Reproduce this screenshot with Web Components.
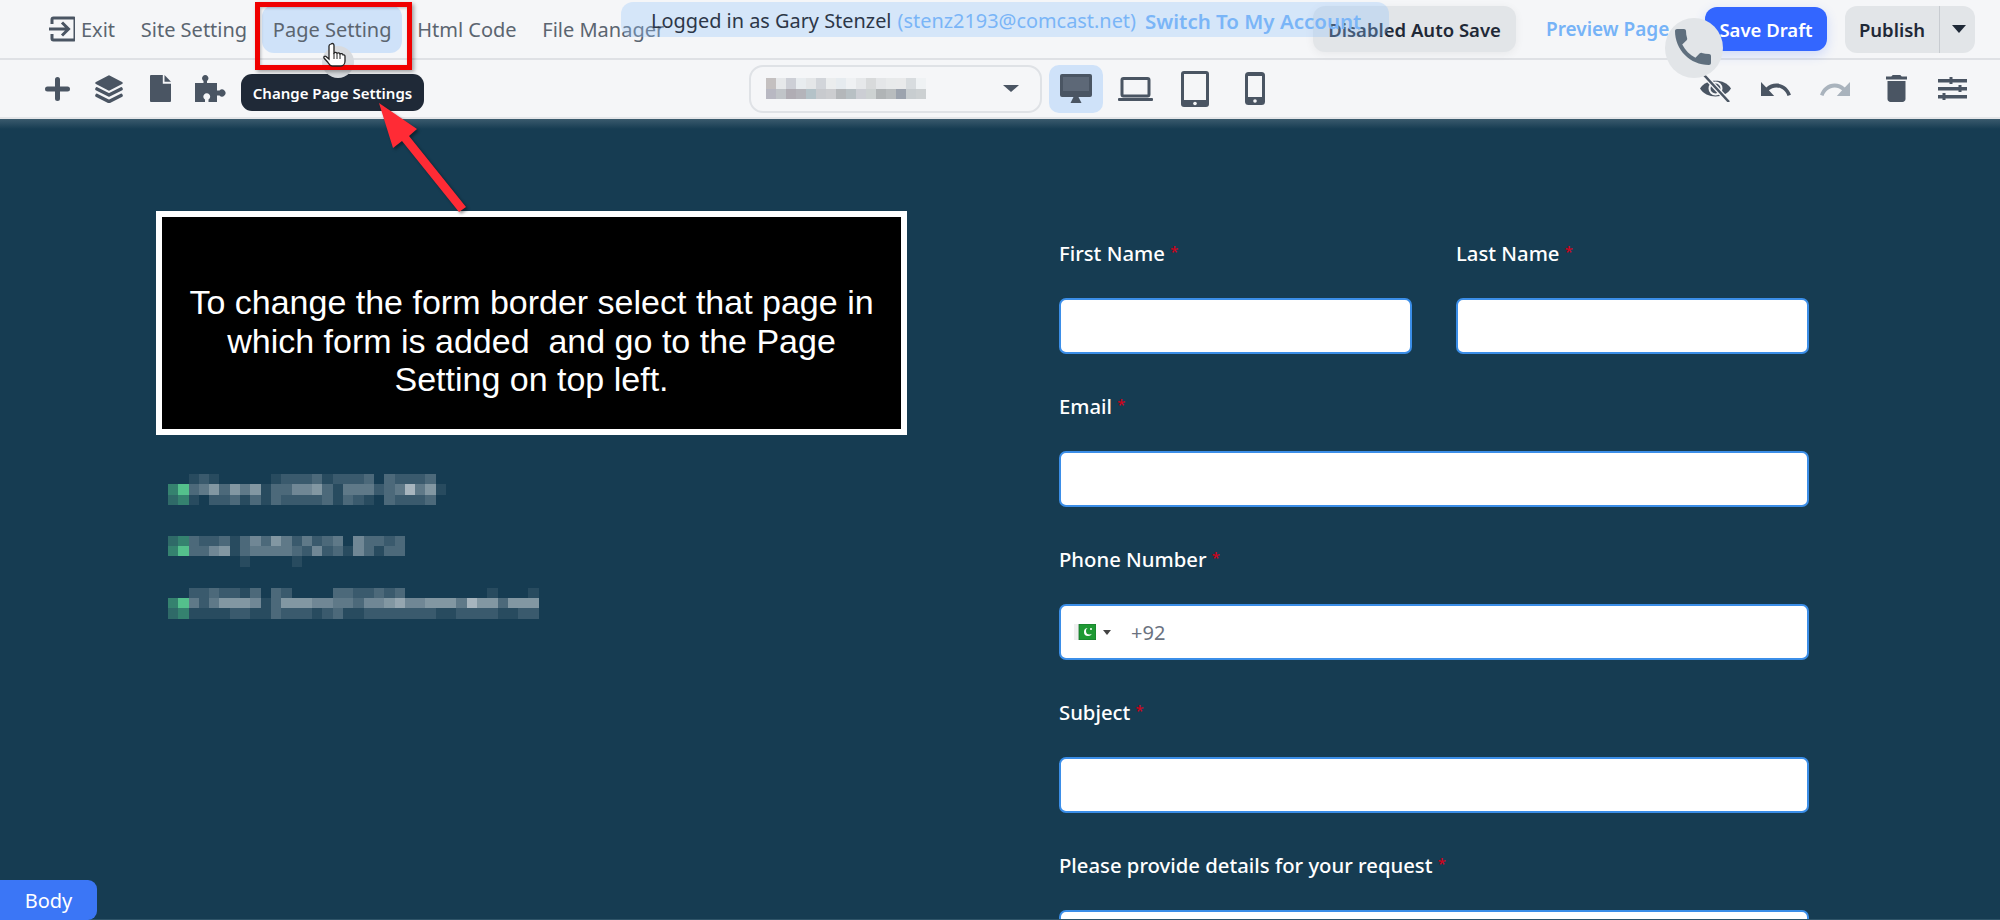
<!DOCTYPE html>
<html>
<head>
<meta charset="utf-8">
<title>Page builder</title>
<style>
    html, body { margin: 0; padding: 0; background: #163c52; }
    body { overflow: hidden; font-family: "Noto Sans", sans-serif; }
</style>
</head>
<body>
<editor-app></editor-app>

<script>
const ICONS = {
    exit: `<path d="M3 8V3.5A1.5 1.5 0 0 1 4.5 2h20A1.5 1.5 0 0 1 26 3.5v19a1.5 1.5 0 0 1-1.5 1.5h-20A1.5 1.5 0 0 1 3 22.500V18" fill="none" stroke="currentColor" stroke-width="3"/><path d="M0 13h19M13 6.500l6.500 6.500-6.500 6.500" fill="none" stroke="currentColor" stroke-width="3"/>`,
    plus: `<path d="M12.500 2.500v19M2.500 12h20" fill="none" stroke="currentColor" stroke-width="5" stroke-linecap="round"/>`,
    layers: `<path d="M14 1.500L26.500 8 14 14.500 1.500 8z" fill="currentColor" stroke="currentColor" stroke-width="2.500" stroke-linejoin="round"/><path d="M2 14l12 6 12-6M2 20.500l12 6 12-6" fill="none" stroke="currentColor" stroke-width="3.600" stroke-linecap="round" stroke-linejoin="round"/>`,
    file: `<path d="M1 0h11.800v8.800H21V26a1 1 0 0 1-1 1H1a1 1 0 0 1-1-1V1a1 1 0 0 1 1-1z" fill="currentColor"/><path d="M14.500 0L21 6.800h-6.500z" fill="currentColor"/>`,
    puzzle: `<path fill="currentColor" d="M0 8h8.500V6a3.200 3.200 0 1 1 3.500 0v2H22v7.500h2.500a3.500 3.500 0 1 1 0 5H22V27H13.500v-2.500a3.400 3.400 0 1 0-3.500 0V27H0z"/>`,
    desktop: `<rect width="32" height="23" rx="2" fill="currentColor"/><rect x="3" y="3" width="26" height="14" fill="#5d6877"/><path d="M10.500 29l3.500-7h4l3.500 7z" fill="currentColor"/>`,
    laptop: `<rect x="4" y="1.500" width="27" height="17.500" rx="1.500" fill="none" stroke="currentColor" stroke-width="3"/><rect y="21" width="35" height="3" rx="1" fill="currentColor"/>`,
    tablet: `<rect width="28" height="36" rx="3" fill="currentColor"/><rect x="3" y="3" width="22" height="26" fill="#f5f6f8"/><circle cx="14" cy="32.500" r="1.800" fill="#f5f6f8"/>`,
    phone: `<rect width="20" height="33" rx="3.500" fill="currentColor"/><rect x="3" y="4" width="14" height="21" fill="#f5f6f8"/><circle cx="10" cy="29" r="1.800" fill="#f5f6f8"/>`,
    eyeoff: `<path d="M0 13.500C6 3 25 3 31 13.500 25 24 6 24 0 13.500z" fill="currentColor"/><circle cx="15.500" cy="13.500" r="6" fill="none" stroke="#f5f6f8" stroke-width="2"/><path d="M4 0l25 27" stroke="#f5f6f8" stroke-width="5"/><path d="M4 0l25 27" stroke="currentColor" stroke-width="2.500"/>`,
    undo: `<path fill="currentColor" d="M12.500 8c-2.650 0-5.050.99-6.900 2.600L2 7v9h9l-3.620-3.620c1.390-1.160 3.160-1.880 5.120-1.880 3.540 0 6.550 2.310 7.600 5.500l2.370-.78C21.080 11.030 17.150 8 12.500 8z"/>`,
    trash: `<path fill="currentColor" d="M6 19c0 1.100.9 2 2 2h8c1.100 0 2-.9 2-2V7H6v12zM19 4h-3.500l-1-1h-5l-1 1H5v2h14V4z"/>`,
    tune: `<path fill="currentColor" d="M0 2h29v3.400H0zM0 10h29v3.400H0zM0 18h29v3.400H0z"/><path fill="currentColor" d="M11.500 0h3v7h-3zM20.500 8h3v7h-3zM4.500 16h3v7h-3z"/>`,
    call: `<path fill="currentColor" d="M6.620 10.790c1.440 2.830 3.760 5.140 6.590 6.590l2.200-2.200c.27-.27.67-.36 1.020-.24 1.120.37 2.330.57 3.570.57.55 0 1 .45 1 1V20c0 .55-.45 1-1 1-9.390 0-17-7.610-17-17 0-.55.45-1 1-1h3.500c.55 0 1 .45 1 1 0 1.250.2 2.450.57 3.570.11.35.03.74-.25 1.020l-2.200 2.200z"/>`
};

class ToolIcon extends HTMLElement {
    constructor() {
        super();
        const w = this.getAttribute('w');
        const h = this.getAttribute('h');
        const box = this.getAttribute('box') || `0 0 ${w} ${h}`;
        this.attachShadow({ mode: 'open' }).innerHTML = `
            <style>
                :host { display: block; width: ${w}px; height: ${h}px; color: #4a5563; flex: none; }
                svg { display: block; width: 100%; height: 100%; }
            </style>
            <svg viewBox="${box}" preserveAspectRatio="none">${ICONS[this.getAttribute('name')]}</svg>`;
    }
}
customElements.define('tool-icon', ToolIcon);

class PixelStrip extends HTMLElement {
    constructor() {
        super();
        const rows = (this.getAttribute('rows') || '').split('|');
        const cols = Math.max(...rows.map(r => r.length));
        let cells = '';
        rows.forEach(r => {
            for (let i = 0; i < cols; i++) {
                const c = r[i] || '.';
                let bg = 'transparent';
                if (c === 'x') bg = '#2f6a68';
                else if (c === 'y') bg = '#35826f';
                else if (c === 'z') bg = '#54c08c';
                else if (c !== '.') bg = `rgba(255,255,255,${(Number(c) * 0.078).toFixed(3)})`;
                cells += `<i style="background:${bg}"></i>`;
            }
        });
        this.attachShadow({ mode: 'open' }).innerHTML = `
            <style>
                :host { display: block; }
                .g { display: grid; grid-template-columns: repeat(${cols}, 10.3px); grid-auto-rows: 10.3px; width: max-content; filter: blur(.5px); }
            </style>
            <div class="g">${cells}</div>`;
    }
}
customElements.define('pixel-strip', PixelStrip);

class NavItem extends HTMLElement {
    constructor() {
        super();
        this.attachShadow({ mode: 'open' }).innerHTML = `
            <style>
                :host { display: flex; align-items: center; gap: 6px; height: 48px; padding: 0 11px; border-radius: 12px; color: #5b6570; font-size: 20px; white-space: nowrap; }
                :host([active]) { background: #cfe2f9; }
            </style>
            <slot></slot>`;
    }
}
customElements.define('nav-item', NavItem);

class TopBar extends HTMLElement {
    constructor() {
        super();
        this.attachShadow({ mode: 'open' }).innerHTML = `
            <style>
                :host { display: flex; align-items: center; height: 60px; box-sizing: border-box; padding: 0 25px 0 38px; background: #f5f6f8; border-bottom: 2px solid #dfe1e5; }
                nav { display: flex; align-items: center; gap: 3.700px; }
                .right { margin-left: auto; display: flex; align-items: center; font-size: 18.500px; font-weight: 600; white-space: nowrap; }
                .auto { height: 46px; width: 203px; display: flex; align-items: center; justify-content: center; background: #e2e5e8; border-radius: 12px; color: #1f2937; box-shadow: 0 2px 10px rgba(0,0,0,.06); }
                .preview { margin-left: 30px; width: 159px; color: #76b3f7; font-size: 19px; }
                .save { height: 44px; width: 122px; display: flex; align-items: center; justify-content: center; background: #3366ff; border-radius: 12px; color: #fff; box-shadow: 0 4px 12px rgba(51,102,255,.2); }
                .publish { margin-left: 18px; height: 47px; width: 130px; display: flex; align-items: center; background: #e2e5e8; border-radius: 12px; color: #1f2937; }
                .publish span { width: 94px; text-align: center; line-height: 47px; border-right: 1px solid #c8ccd1; height: 47px; }
                .caret { margin-left: 12px; width: 0; height: 0; border: 7px solid transparent; border-top: 8px solid #1f2937; border-bottom: 0; }
            </style>
            <nav>
                <nav-item><tool-icon name="exit" w="26" h="26"></tool-icon>Exit</nav-item>
                <nav-item>Site Setting</nav-item>
                <nav-item active>Page Setting</nav-item>
                <nav-item>Html Code</nav-item>
                <nav-item>File Manager</nav-item>
            </nav>
            <div class="right">
                <div class="auto">Disabled Auto Save</div>
                <div class="preview">Preview Page</div>
                <div class="save">Save Draft</div>
                <div class="publish"><span>Publish</span><div class="caret"></div></div>
            </div>`;
    }
}
customElements.define('top-bar', TopBar);

class ToolBar extends HTMLElement {
    constructor() {
        super();
        const swatch = (list) => list.map(c => `<i style="background:#${c}"></i>`).join('');
        this.attachShadow({ mode: 'open' }).innerHTML = `
            <style>
                :host { display: grid; grid-template-columns: 749px auto 1fr; align-items: center; height: 59px; box-sizing: border-box; background: #f5f6f8; border-bottom: 2px solid #e3e5e8; }
                .left { display: flex; align-items: center; padding-left: 45px; }
                .center { display: flex; align-items: center; gap: 5.500px; }
                .right { display: flex; align-items: center; justify-content: flex-end; padding-right: 33px; }
                .select { width: 293px; height: 48px; box-sizing: border-box; margin-right: 1.500px; display: flex; align-items: center; justify-content: space-between; padding: 0 21px 0 15px; border: 2px solid #dfe2e6; border-radius: 14px; }
                .blur { display: grid; grid-template-columns: repeat(16, 10px); grid-auto-rows: 10.500px; filter: blur(.5px); }
                .caret { width: 0; height: 0; border: 8px solid transparent; border-top: 7px solid #4a5563; border-bottom: 0; }
                .dev { width: 54px; height: 48px; display: flex; align-items: center; justify-content: center; border-radius: 10px; }
                .dev.on { background: #cfe2f9; }
            </style>
            <div class="left">
                <tool-icon name="plus" w="25" h="24"></tool-icon>
                <tool-icon name="layers" w="28" h="28" style="margin-left:25px"></tool-icon>
                <tool-icon name="file" w="21" h="27" style="margin-left:27px"></tool-icon>
                <tool-icon name="puzzle" w="31" h="27" style="margin-left:24px"></tool-icon>
            </div>
            <div class="center">
                <div class="select">
                    <div class="blur">${swatch(['c4c0c0','e6e8ea','cdcfd6','e8ecef','e4e6e8','d2d5da','ebedee','e6ebef','eff1f3','e6e8ea','d8dadb','e4e6e8','e8eaeb','e9eaeb','d8dcdf','eff2f4','b8b8c2','c0c4c8','b0adb4','b4b4ba','b4c2c8','c8cace','cccdd0','b4b7ba','b8c0c4','ccced4','cdd2d2','b0b4b6','b8bcbe','9ca3ae','c8cdd0','ccd0d2'])}</div>
                    <div class="caret"></div>
                </div>
                <div class="dev on"><tool-icon name="desktop" w="32" h="29"></tool-icon></div>
                <div class="dev"><tool-icon name="laptop" w="35" h="24"></tool-icon></div>
                <div class="dev"><tool-icon name="tablet" w="28" h="36"></tool-icon></div>
                <div class="dev"><tool-icon name="phone" w="20" h="33"></tool-icon></div>
            </div>
            <div class="right">
                <tool-icon name="eyeoff" w="31" h="27"></tool-icon>
                <tool-icon name="undo" w="30" h="14" box="2 7 20.500 9" style="margin-left:30px"></tool-icon>
                <tool-icon name="undo" w="30" h="14" box="2 7 20.500 9" style="margin-left:29px;color:#a9b3bd;transform:scaleX(-1)"></tool-icon>
                <tool-icon name="trash" w="21" h="27" box="5 3 14 18" style="margin-left:36px"></tool-icon>
                <tool-icon name="tune" w="29" h="23" style="margin-left:31px"></tool-icon>
            </div>`;
    }
}
customElements.define('tool-bar', ToolBar);

class FormField extends HTMLElement {
    constructor() {
        super();
        this.attachShadow({ mode: 'open' }).innerHTML = `
            <style>
                :host { display: block; }
                label { display: block; height: 30px; line-height: 26px; margin-bottom: 30px; color: #fff; font-size: 20.300px; font-weight: 500; white-space: nowrap; }
                b { color: #d0021b; font-weight: 500; font-size: 15px; vertical-align: 4px; }
                .box { height: 56px; box-sizing: border-box; display: flex; align-items: center; background: #fff; border: 2px solid #3b8ee8; border-radius: 7px; }
            </style>
            <label>${this.getAttribute('label')} <b>*</b></label>
            <div class="box"><slot></slot></div>`;
    }
}
customElements.define('form-field', FormField);

class ContactForm extends HTMLElement {
    constructor() {
        super();
        this.attachShadow({ mode: 'open' }).innerHTML = `
            <style>
                :host { display: grid; grid-template-columns: 353px 353px; column-gap: 44px; row-gap: 37px; padding-top: 119px; }
                .wide { grid-column: 1 / 3; }
                .dial { display: flex; align-items: center; padding-left: 13px; color: #6b7280; font-size: 20px; }
                .caret { width: 0; height: 0; margin-left: 7px; border: 4px solid transparent; border-top: 5px solid #444; border-bottom: 0; }
                .num { margin-left: 20px; }
                svg { display: block; }
            </style>
            <form-field label="First Name"></form-field>
            <form-field label="Last Name"></form-field>
            <form-field class="wide" label="Email"></form-field>
            <form-field class="wide" label="Phone Number">
                <div class="dial">
                    <svg width="22" height="16" viewBox="0 0 22 16"><rect width="5" height="16" fill="#f0f0f0"/><rect x="5" width="17" height="16" fill="#1f9a34" stroke="#15702a" stroke-width=".8"/><circle cx="14" cy="8" r="4" fill="#fff"/><circle cx="15.500" cy="7" r="3.500" fill="#1f9a34"/><circle cx="17" cy="5" r="1" fill="#fff"/></svg>
                    <div class="caret"></div>
                    <span class="num">+92</span>
                </div>
            </form-field>
            <form-field class="wide" label="Subject"></form-field>
            <form-field class="wide" label="Please provide details for your request"></form-field>`;
    }
}
customElements.define('contact-form', ContactForm);

class NoticeBox extends HTMLElement {
    constructor() {
        super();
        this.attachShadow({ mode: 'open' }).innerHTML = `
            <style>
                :host { display: block; width: 751px; height: 224px; box-sizing: border-box; border: 6.500px solid #fff; background: #000; color: #fff; padding-top: 66px; text-align: center; font-family: "Liberation Sans", Arial, sans-serif; font-size: 34px; line-height: 38.500px; }
            </style>
            <slot></slot>`;
    }
}
customElements.define('notice-box', NoticeBox);

class FormCanvas extends HTMLElement {
    constructor() {
        super();
        this.attachShadow({ mode: 'open' }).innerHTML = `
            <style>
                :host { display: grid; grid-template-columns: 751px 750px; column-gap: 152px; height: 801px; box-sizing: border-box; padding-left: 156px; background: linear-gradient(#3a5a6d, #163c52 10px); overflow: hidden; border-bottom: 1px solid #2f5468; }
                .info { padding-top: 92px; }
                .rows { padding: 39px 0 0 12px; }
            </style>
            <div class="info">
                <notice-box>To change the form border select that page in<br>which form is added&nbsp; and go to the Page<br>Setting on top left.</notice-box>
                <div class="rows">
                    <pixel-strip rows="..121.....1222312223.32223|yz3463646133556314442348461|xy102231313222231321032223"></pixel-strip>
                    <pixel-strip style="margin-top:31px" rows="xy322313536424234053323|yz335613444432523153133|.......1...01"></pixel-strip>
                    <pixel-strip style="margin-top:21px" rows="..2232213.32....3322323........1...1|yz4246665136665544355675566648663666|xy1111221132221231122222221122221122"></pixel-strip>
                </div>
            </div>
            <contact-form></contact-form>`;
    }
}
customElements.define('form-canvas', FormCanvas);

class LoginBanner extends HTMLElement {
    constructor() {
        super();
        this.attachShadow({ mode: 'open' }).innerHTML = `
            <style>
                :host { position: absolute; left: 621px; top: 2px; width: 768px; height: 35px; box-sizing: border-box; padding: 2px 0 0 30px; display: flex; align-items: center; background: rgba(147,197,253,.32); border-radius: 12px; color: #2d3748; font-size: 19.900px; white-space: nowrap; }
                .mail { margin-left: 6px; color: #7ab5f7; }
                .switch { margin-left: 9px; color: #7ab5f7; font-weight: 600; font-size: 20.500px; }
            </style>
            <span>Logged in as Gary Stenzel</span><span class="mail">(stenz2193@comcast.net)</span><span class="switch">Switch To My Account</span>`;
    }
}
customElements.define('login-banner', LoginBanner);

class CallBubble extends HTMLElement {
    constructor() {
        super();
        this.attachShadow({ mode: 'open' }).innerHTML = `
            <style>
                :host { position: absolute; left: 1665px; top: 18px; width: 58px; height: 60px; display: flex; align-items: center; justify-content: center; background: #e2e5e8; border-radius: 50%; }
            </style>
            <tool-icon name="call" w="36" h="36" box="3 3 18 18" style="color:#5f6f7e;margin:-2px 0 0 -3px"></tool-icon>`;
    }
}
customElements.define('call-bubble', CallBubble);

class PageCallout extends HTMLElement {
    constructor() {
        super();
        this.attachShadow({ mode: 'open' }).innerHTML = `
            <style>
                :host { position: absolute; left: 0; top: 0; }
                .tip { position: absolute; left: 241px; top: 74px; width: 183px; height: 37px; display: flex; align-items: center; justify-content: center; background: #1f2937; border-radius: 11px; color: #fff; font-size: 15px; font-weight: 600; white-space: nowrap; }
                .glow { position: absolute; left: 322px; top: 46px; width: 32px; height: 32px; border-radius: 50%; background: #d8dbdf; }
                .frame { position: absolute; left: 255px; top: 2px; width: 157px; height: 68px; box-sizing: border-box; border: 5px solid #f00000; box-shadow: 2px 2px 4px rgba(0,0,0,.35), inset 1px 1px 3px rgba(0,0,0,.25); }
                svg { position: absolute; overflow: visible; left: 0; top: 0; }
                .arrow { filter: drop-shadow(2px 2px 1.500px rgba(0,0,0,.4)); }
            </style>
            <div class="tip">Change Page Settings</div>
            <div class="glow"></div>
            <div class="frame"></div>
            <svg class="arrow" width="1" height="1"><path d="M379 103L417 129 409 136 466 207 459 212 402 141 393 148z" fill="#ff2b35"/></svg>
            <svg width="1" height="1"><g transform="translate(323 43)"><path d="M8 1c1.500-1 3-.5 3 1.500V10c1-1 2.500-.8 3 .3 1-.8 2.600-.5 3 .6 1-.6 2.600-.2 3 1 1-.3 2 .3 2 1.500V18c0 3-2 5-4 5H9c-2 0-3-2-4-3.500L1 15c-.7-1.200.8-2.500 2-1.500L6 16V3c0-.6.6-1.600 2-2z" fill="#fff" stroke="#222" stroke-width="1.300"/><path d="M11 10v6M14 10.500V16M17 11v5" stroke="#222" stroke-width="1"/></g></svg>`;
    }
}
customElements.define('page-callout', PageCallout);

class BodyTag extends HTMLElement {
    constructor() {
        super();
        this.attachShadow({ mode: 'open' }).innerHTML = `
            <style>
                :host { position: absolute; left: 0; bottom: 0; width: 97px; height: 40px; display: flex; align-items: center; justify-content: center; background: #3b76f6; border-radius: 0 9px 9px 0; color: #fff; font-size: 20px; }
            </style>
            <slot></slot>`;
    }
}
customElements.define('body-tag', BodyTag);

class EditorApp extends HTMLElement {
    constructor() {
        super();
        this.attachShadow({ mode: 'open' }).innerHTML = `
            <style>
                :host { display: block; position: relative; width: 2000px; height: 920px; overflow: hidden; }
            </style>
            <top-bar></top-bar>
            <tool-bar></tool-bar>
            <form-canvas></form-canvas>
            <login-banner></login-banner>
            <call-bubble></call-bubble>
            <page-callout></page-callout>
            <body-tag>Body</body-tag>`;
    }
}
customElements.define('editor-app', EditorApp);
</script>
</body>
</html>
